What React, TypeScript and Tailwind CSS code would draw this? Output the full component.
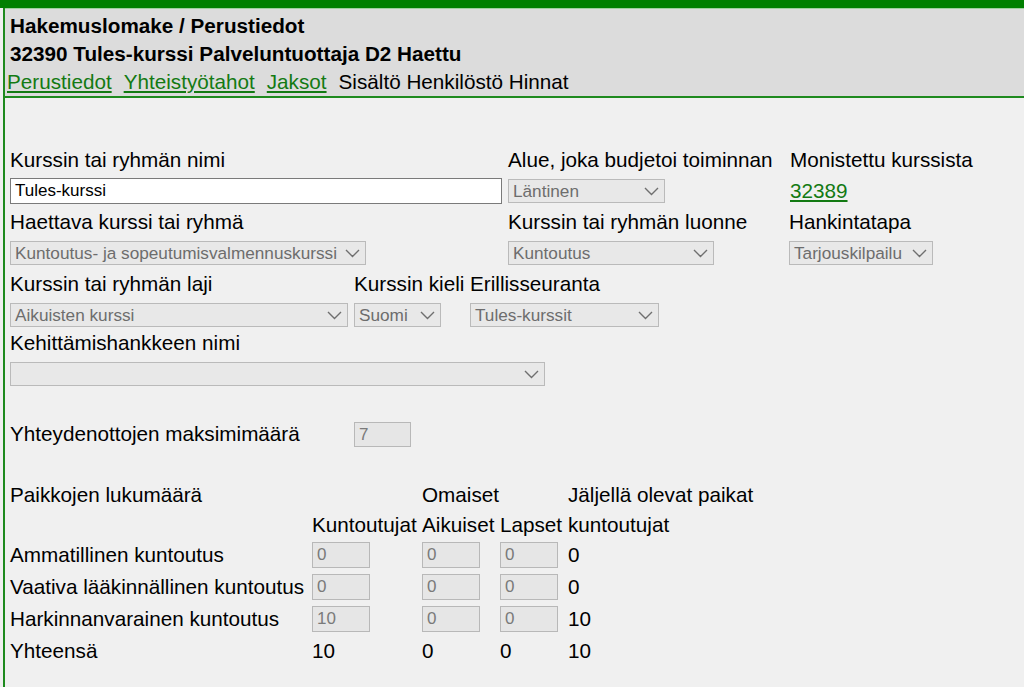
import React from 'react';

// Disabled-looking select box with a thin chevron on the right
function FakeSelect({ width, value }: { width: string; value?: string }) {
    return (
        <div
            className={`${width} relative h-[24px] border border-[#bababa] bg-[#e8e8e8] pl-[4px] pr-[24px] text-[17.2px] leading-[22px] text-[#6d6d6d] whitespace-nowrap overflow-hidden`}
        >
            {value}
            <svg
                className="absolute right-[5px] top-[7px]"
                width="15"
                height="9"
                viewBox="0 0 15 9"
                fill="none"
            >
                <path d="M1 1 L7.5 7.5 L14 1" stroke="#6f6f6f" strokeWidth="1.4" />
            </svg>
        </div>
    );
}

function FakeInput({ width, value, height = 'h-[26px]' }: { width: string; value: string; height?: string }) {
    return (
        <div
            className={`${width} ${height} border border-[#b8b8b8] bg-[#e6e6e6] pl-[4px] text-[17px] leading-[24px] text-[#7a7a7a]`}
        >
            {value}
        </div>
    );
}

function Field({ width, label, children }: { width: string; label: string; children?: React.ReactNode }) {
    return (
        <div className={width}>
            <div className="h-[24px] text-[20.7px] leading-[24px] whitespace-nowrap">{label}</div>
            <div className="flex h-[38px] items-center">{children}</div>
        </div>
    );
}

const rows = [
    { label: 'Ammatillinen kuntoutus', k: '0', a: '0', l: '0', left: '0' },
    { label: 'Vaativa lääkinnällinen kuntoutus', k: '0', a: '0', l: '0', left: '0' },
    { label: 'Harkinnanvarainen kuntoutus', k: '10', a: '0', l: '0', left: '10' },
];

export default function App() {
    return (
        <div className="min-h-[687px] bg-[#f0f0f0] font-['Liberation_Sans',Arial,sans-serif] text-black">
            <div className="h-[8px] bg-[#008000]" />
            <div className="ml-[3px] min-h-[679px] border-l-2 border-[#1e8a1e]">
                {/* Header */}
                <div className="border-t border-[#9fd09f] border-b-2 border-b-[#1e8a1e] bg-[#dcdcdc] pt-[3px] pl-[5px]">
                    <div className="h-[28px] text-[20.7px] leading-[28px] font-bold">Hakemuslomake / Perustiedot</div>
                    <div className="h-[28px] text-[20.7px] leading-[28px] font-bold">
                        32390 Tules-kurssi Palveluntuottaja D2 Haettu
                    </div>
                    <div className="-ml-[3px] flex h-[28px] gap-[12px] text-[20.7px] leading-[28px]">
                        <a className="text-[#137a13] underline underline-offset-2">Perustiedot</a>
                        <a className="text-[#137a13] underline underline-offset-2">Yhteistyötahot</a>
                        <a className="text-[#137a13] underline underline-offset-2">Jaksot</a>
                        <span>Sisältö Henkilöstö Hinnat</span>
                    </div>
                </div>

                {/* Form */}
                <div className="pt-[50px] pl-[5px]">
                    <div className="flex">
                        <Field width="w-[498px]" label="Kurssin tai ryhmän nimi">
                            <div className="h-[26px] w-[492px] border border-[#7a7a7a] bg-white pl-[4px] text-[17px] leading-[24px]">
                                Tules-kurssi
                            </div>
                        </Field>
                        <Field width="w-[282px]" label="Alue, joka budjetoi toiminnan">
                            <FakeSelect width="w-[157px]" value="Läntinen" />
                        </Field>
                        <Field width="w-[230px]" label="Monistettu kurssista">
                            <a className="text-[20.7px] text-[#137a13] underline underline-offset-2">32389</a>
                        </Field>
                    </div>

                    <div className="flex">
                        <Field width="w-[498px]" label="Haettava kurssi tai ryhmä">
                            <FakeSelect width="w-[356px]" value="Kuntoutus- ja sopeutumisvalmennuskurssi" />
                        </Field>
                        <Field width="w-[281px]" label="Kurssin tai ryhmän luonne">
                            <FakeSelect width="w-[206px]" value="Kuntoutus" />
                        </Field>
                        <Field width="w-[230px]" label="Hankintatapa">
                            <FakeSelect width="w-[144px]" value="Tarjouskilpailu" />
                        </Field>
                    </div>

                    <div className="flex">
                        <Field width="w-[344px]" label="Kurssin tai ryhmän laji">
                            <FakeSelect width="w-[338px]" value="Aikuisten kurssi" />
                        </Field>
                        <Field width="w-[116px]" label="Kurssin kieli">
                            <FakeSelect width="w-[87px]" value="Suomi" />
                        </Field>
                        <Field width="w-[300px]" label="Erillisseuranta">
                            <FakeSelect width="w-[189px]" value="Tules-kurssit" />
                        </Field>
                    </div>

                    <div className="-mt-[3px] flex">
                        <Field width="w-[600px]" label="Kehittämishankkeen nimi">
                            <FakeSelect width="w-[535px]" />
                        </Field>
                    </div>

                    <div className="mt-[25px] flex h-[32px] items-center">
                        <div className="w-[344px] text-[20.7px]">Yhteydenottojen maksimimäärä</div>
                        <FakeInput width="w-[57px]" value="7" height="h-[25px]" />
                    </div>

                    {/* Places table */}
                    <div className="mt-[29px] text-[20.7px]">
                        <div className="flex h-[32px] items-center">
                            <div className="w-[412px]">Paikkojen lukumäärä</div>
                            <div className="w-[146px]">Omaiset</div>
                            <div>Jäljellä olevat paikat</div>
                        </div>
                        <div className="flex h-[28px] items-center whitespace-nowrap">
                            <div className="w-[302px]" />
                            <div className="w-[110px]">Kuntoutujat</div>
                            <div className="w-[78px]">Aikuiset</div>
                            <div className="w-[68px]">Lapset</div>
                            <div>kuntoutujat</div>
                        </div>
                        {rows.map((r) => (
                            <div key={r.label} className="flex h-[32px] items-center">
                                <div className="w-[302px] whitespace-nowrap">{r.label}</div>
                                <div className="w-[110px]">
                                    <FakeInput width="w-[58px]" value={r.k} />
                                </div>
                                <div className="w-[78px]">
                                    <FakeInput width="w-[58px]" value={r.a} />
                                </div>
                                <div className="w-[68px]">
                                    <FakeInput width="w-[58px]" value={r.l} />
                                </div>
                                <div>{r.left}</div>
                            </div>
                        ))}
                        <div className="flex h-[32px] items-center">
                            <div className="w-[302px]">Yhteensä</div>
                            <div className="w-[110px]">10</div>
                            <div className="w-[78px]">0</div>
                            <div className="w-[68px]">0</div>
                            <div>10</div>
                        </div>
                    </div>
                </div>
            </div>
        </div>
    );
}
